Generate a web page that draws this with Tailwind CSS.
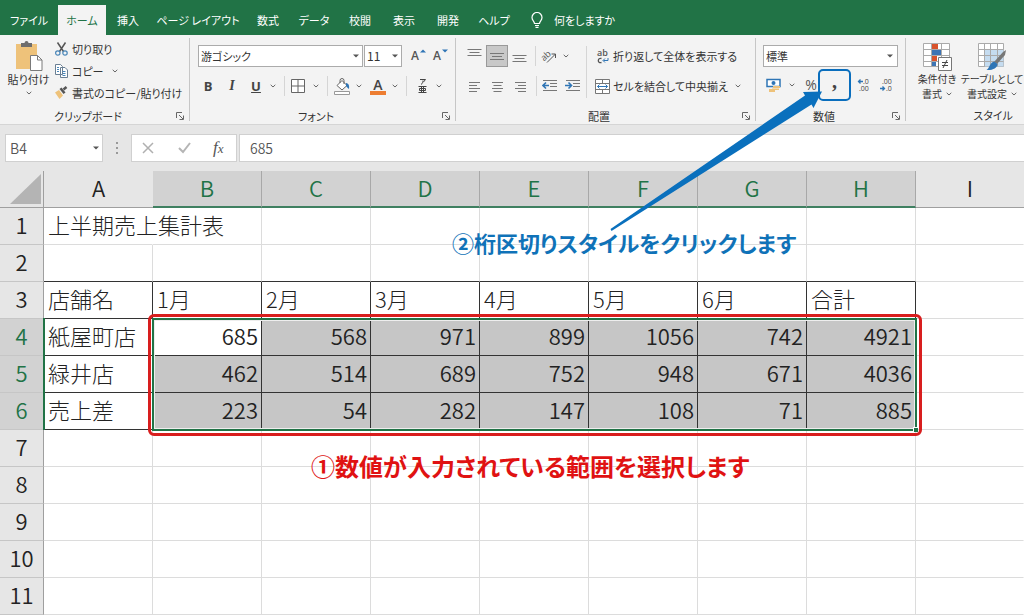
<!DOCTYPE html>
<html lang="ja">
<head>
  <meta charset="UTF-8" />
  <meta name="viewport" content="width=device-width, initial-scale=1" />
  <title>上半期売上集計表 - Excel</title>
  <script src="https://cdn.jsdelivr.net/npm/@tailwindcss/browser@4"></script>
</head>
<body class="relative min-h-screen overflow-hidden bg-[#e6e6e6] font-['Noto_Sans_CJK_JP',sans-serif] text-[11px] leading-4 text-[#333] [font-feature-settings:'palt']">

  <!-- shared icons -->
  <svg class="hidden">
    <symbol id="chev" viewBox="0 0 6 4"><path d="M.7.8 3 3 5.300.8" fill="none" stroke="#666" /></symbol>
    <symbol id="caret" viewBox="0 0 6 4"><path d="M0 .5h6L3 3.500z" fill="#555" /></symbol>
    <symbol id="launcher" viewBox="0 0 8 8"><path d="M.5 6V.5H6M3 3l4 4M7.500 3.500v4h-4" fill="none" stroke="#666" /></symbol>
  </svg>

  <!-- tabs -->
  <nav class="flex h-[35px] bg-[#217346] pt-[5px] text-white">
    <a href="#" class="flex w-[58px] items-center justify-center">ファイル</a>
    <a href="#" class="flex w-12 items-center justify-center bg-[#f3f3f3] text-[#217346]">ホーム</a>
    <a href="#" class="flex w-11 items-center justify-center">挿入</a>
    <a href="#" class="flex w-24 items-center justify-center">ページ レイアウト</a>
    <a href="#" class="flex w-11 items-center justify-center">数式</a>
    <a href="#" class="flex w-12 items-center justify-center">データ</a>
    <a href="#" class="flex w-11 items-center justify-center">校閲</a>
    <a href="#" class="flex w-11 items-center justify-center">表示</a>
    <a href="#" class="flex w-11 items-center justify-center">開発</a>
    <a href="#" class="flex w-12 items-center justify-center">ヘルプ</a>
    <button class="ml-3 flex items-center gap-[10px]">
      <svg class="h-4 w-[14px]" viewBox="0 0 14 16" fill="none" stroke="#fff" stroke-width="1.2"><path d="M4.500 11.500C4.500 9.500 2 8.500 2 5.500a5 5 0 0 1 10 0c0 3-2.500 4-2.500 6zM5 13.500h4M5.500 15.300h3" /></svg>
      何をしますか
    </button>
  </nav>

  <!-- ribbon -->
  <div class="flex h-[90px] border-b border-[#d5d5d5] bg-[#f3f3f3] pt-[3px]">

    <section class="flex h-[83px] w-[189px] shrink-0 flex-col">
      <div class="flex h-[69px] shrink-0">
        <button class="flex w-[58px] flex-col items-center pr-px pt-[3px]">
          <svg class="h-[30px] w-[28px]" viewBox="0 0 28 30">
            <path d="M1 3h21v25H1z" fill="#eec27a" /><path d="M6 6V2h3.500a2 2 0 0 1 4 0H17v4z" fill="#6d6d6d" />
            <path d="M15.500 14.500h7l4.500 4.500v10.500H15.500z" fill="#fff" stroke="#7a7a7a" /><path d="M22.500 14.500V19H27" fill="none" stroke="#7a7a7a" />
          </svg>
          <span class="whitespace-nowrap">貼り付け</span>
          <svg class="mt-1 h-1 w-[6px]"><use href="#chev" /></svg>
        </button>
        <div class="-ml-[3px] flex flex-col whitespace-nowrap">
          <button class="flex h-[22px] items-center gap-1">
            <svg class="h-[14px] w-[13px]" viewBox="0 0 13 14" fill="none"><path d="M2.500.5 8.500 9.500M10.500.5l-6 9" stroke="#555" stroke-width="1.500" /><circle cx="2.800" cy="11" r="2.200" stroke="#4a86b8" stroke-width="1.200" /><circle cx="10" cy="11" r="2.200" stroke="#4a86b8" stroke-width="1.200" /></svg>
            切り取り
          </button>
          <button class="flex h-[22px] items-center gap-1">
            <svg class="h-[14px] w-[13px]" viewBox="0 0 13 14" fill="#fff" stroke="#6a7f93"><path d="M.5.5h5l2 2v8h-7zM5.500 3.500h4.500l2.500 2.500v7.500h-7z" /><path d="M2 3.500h2M2 5.500h2M2 7.500h2M7.500 7.500h3M7.500 9.500h3M7.500 11.500h3" stroke="#4a86b8" /></svg>
            コピー
            <svg class="ml-1 h-1 w-[6px]"><use href="#chev" /></svg>
          </button>
          <button class="flex h-[22px] items-center gap-1">
            <svg class="h-[14px] w-[13px]" viewBox="0 0 13 14"><path d="m0 6.500 4-2.500 4 5.500-3.500 3.500z" fill="#eec27a" /><path d="m4.500 3 2-1.500 4 5-2 1.500z" fill="#555" /><path d="m8.500 3.500 3-2.500" stroke="#555" stroke-width="2.500" /></svg>
            書式のコピー/貼り付け
          </button>
        </div>
      </div>
      <div class="flex h-[17px] shrink-0 items-center">
        <span class="flex-1 text-center">クリップボード</span>
        <button class="w-[13px]" aria-label="クリップボードの設定"><svg class="h-2 w-2"><use href="#launcher" /></svg></button>
      </div>
    </section>

    <section class="flex h-[83px] w-[266px] shrink-0 flex-col border-l border-[#c6c6c6]">
      <div class="flex h-[69px] shrink-0 flex-col pl-2">
        <div class="flex items-center pt-[7px]">
          <div class="relative">
            <select aria-label="フォント" class="block h-[22px] w-[165px] appearance-none border border-[#ababab] bg-white pl-[2px]"><option>游ゴシック</option></select>
            <svg class="pointer-events-none absolute right-1 top-[9px] h-1 w-[6px]"><use href="#caret" /></svg>
          </div>
          <div class="relative ml-[1px]">
            <select aria-label="フォント サイズ" class="block h-[22px] w-[38px] appearance-none border border-[#ababab] bg-white pl-[2px] text-[12px]"><option>11</option></select>
            <svg class="pointer-events-none absolute right-1 top-[9px] h-1 w-[6px]"><use href="#caret" /></svg>
          </div>
          <button class="relative ml-2 w-4 pl-[1px] text-left font-['Open_Sans'] text-[12px] font-semibold text-[#555]">A<svg class="absolute right-0 top-[1px] h-1 w-[6px]" viewBox="0 0 6 4"><path d="M0 3.500h6L3 .5z" fill="#2f75b5" /></svg></button>
          <button class="relative ml-[6px] w-4 pl-[1px] text-left font-['Open_Sans'] text-[12px] font-semibold text-[#555]">A<svg class="absolute right-0 top-[1px] h-1 w-[6px]" viewBox="0 0 6 4"><path d="M0 .5h6L3 3.500z" fill="#2f75b5" /></svg></button>
        </div>
        <div class="flex h-[38px] items-center text-[#444]">
          <button class="w-5 text-center font-['Open_Sans'] text-[13px] font-bold">B</button>
          <button class="w-7 text-center font-['Liberation_Serif'] text-[14px] font-bold italic">I</button>
          <button class="w-5 text-center font-['Open_Sans'] text-[13px] font-bold underline">U</button>
          <svg class="ml-1 h-1 w-[6px]"><use href="#chev" /></svg>
          <span class="ml-2 h-5 border-l border-[#d5d5d5]"></span>
          <svg class="ml-[6px] h-[14px] w-[14px]" viewBox="0 0 14 14" fill="#fff" stroke="#666"><path d="M.5.5h13v13H.5zM7 .5v13M.5 7h13" /></svg>
          <svg class="ml-2 h-1 w-[6px]"><use href="#chev" /></svg>
          <span class="ml-2 h-5 border-l border-[#d5d5d5]"></span>
          <svg class="ml-[6px] h-[17px] w-4" viewBox="0 0 16 17"><path d="m3 7.500 5-5 5 5-5 4.500z" fill="#fff" stroke="#666" /><path d="M6 5V2.500a2 2 0 0 1 4 0V6" fill="none" stroke="#666" /><path d="M12 5c3 .5 3.500 3 3 6-1.500-1-2-2-3-3z" fill="#2f75b5" /><path d="M.5 13.500h15v3H.5z" fill="#fff" stroke="#999" /></svg>
          <svg class="ml-[6px] h-1 w-[6px]"><use href="#chev" /></svg>
          <button class="ml-2 h-[17px] w-4 border-b-[4px] border-[#ed7d31] text-center font-['Open_Sans'] text-[14px] leading-[13px] font-semibold">A</button>
          <svg class="ml-[6px] h-1 w-[6px]"><use href="#chev" /></svg>
          <span class="ml-2 h-5 border-l border-[#d5d5d5]"></span>
          <button aria-label="ふりがなの表示" class="ml-[10px]"><svg class="h-4 w-[11px]" viewBox="0 0 11 16" fill="none" stroke="#444"><path d="M3 1.500h5.500L6.500 4M6 2.500c0 2-.5 3-2 4M1.500 8.500h8M1.500 14.500h8M2.500 10.500h6v2h-6zM4.500 8.500v6M6.500 8.500v6" /></svg></button>
          <svg class="ml-2 h-1 w-[6px]"><use href="#chev" /></svg>
        </div>
      </div>
      <div class="flex h-[17px] shrink-0 items-center">
        <span class="flex-1 text-center">フォント</span>
        <button class="w-[13px]" aria-label="フォントの設定"><svg class="h-2 w-2"><use href="#launcher" /></svg></button>
      </div>
    </section>

    <section class="flex h-[83px] w-[300px] shrink-0 flex-col border-l border-[#c6c6c6]">
      <div class="flex h-[69px] shrink-0">
        <div class="flex w-[130px] flex-col pl-[7px]">
          <div class="flex h-[36px] items-center">
            <svg class="mx-1 h-[22px] w-[15px]" viewBox="0 0 15 22" stroke="#777"><path d="M.5 4.500h14M2.500 7.500h10M.5 10.500h14" /></svg>
            <button aria-label="上下中央揃え" class="flex h-[22px] w-[22px] items-center justify-center border border-[#999] bg-[#c8c8c8]"><svg class="h-[11px] w-[14px]" viewBox="0 0 14 11" stroke="#777"><path d="M0 2.500h14M2 5.500h10M0 8.500h14" /></svg></button>
            <svg class="mx-1 h-[22px] w-[15px]" viewBox="0 0 15 22" stroke="#777"><path d="M.5 10.500h14M2.500 13.500h10M.5 16.500h14" /></svg>
            <span class="ml-1 h-5 border-l border-[#d5d5d5]"></span>
            <svg class="ml-[5px] h-4 w-[17px]" viewBox="0 0 17 16" overflow="visible"><text x="0" y="10" font-family="Open Sans" font-size="9" fill="#555" transform="rotate(-42 6 8)">ab</text><path d="M6 14.500 14.500 6M10.500 6h4v4" fill="none" stroke="#555" /></svg>
            <svg class="ml-[5px] h-1 w-[6px] shrink-0"><use href="#chev" /></svg>
          </div>
          <div class="flex h-6 items-center">
            <svg class="mx-[6px] h-[11px] w-[11px]" viewBox="0 0 11 11" stroke="#777"><path d="M0 1.500h11M0 4.500h8M0 7.500h11M0 10.500h8" /></svg>
            <svg class="mx-[6px] h-[11px] w-[11px]" viewBox="0 0 11 11" stroke="#777"><path d="M0 1.500h11M1.500 4.500h8M0 7.500h11M1.500 10.500h8" /></svg>
            <svg class="mx-[6px] h-[11px] w-[11px]" viewBox="0 0 11 11" stroke="#777"><path d="M0 1.500h11M3 4.500h8M0 7.500h11M3 10.500h8" /></svg>
            <span class="ml-1 h-5 border-l border-[#d5d5d5]"></span>
            <svg class="ml-[5px] h-3 w-[15px]" viewBox="0 0 15 12"><path d="M1 .5h14M8 3.500h7M8 6.500h7M1 10.500h14" stroke="#777" /><path d="M7 5.500H1.500M4 2.500l-3 3 3 3" fill="none" stroke="#2f75b5" stroke-width="1.600" /></svg>
            <svg class="ml-2 h-3 w-[15px]" viewBox="0 0 15 12"><path d="M1 .5h14M8 3.500h7M8 6.500h7M1 10.500h14" stroke="#777" /><path d="M0 5.500h5.500M3.500 2.500l3 3-3 3" fill="none" stroke="#2f75b5" stroke-width="1.600" /></svg>
          </div>
        </div>
        <div class="mt-2 h-[52px] border-l border-[#d5d5d5]"></div>
        <div class="flex flex-col whitespace-nowrap pl-2">
          <button class="flex h-[36px] items-center gap-[3px]">
            <svg class="h-[15px] w-[15px]" viewBox="0 0 15 15" overflow="visible"><text x="2" y="7" font-family="Open Sans" font-size="9" font-weight="600" fill="#555">ab</text><path d="M6.500 9.500c-4-1-4.500 5 0 4" fill="none" stroke="#555" stroke-width="1.300" /><path d="M13 9v2.500H8.500m1.500-2-2 2 2 2" fill="none" stroke="#2f75b5" /></svg>
            折り返して全体を表示する
          </button>
          <button class="flex h-6 items-center gap-[3px]">
            <svg class="h-[15px] w-[15px]" viewBox="0 0 15 15"><path d="M.5.5h14v14H.5zM.5 4.500h14M.5 10.500h14M7.500.5v4M7.500 10.500v4" fill="#fff" stroke="#777" /><path d="M2.500 7.500h10M4.500 5.500l-2 2 2 2M10.500 5.500l2 2-2 2" fill="none" stroke="#2f75b5" /></svg>
            セルを結合して中央揃え
            <svg class="ml-1 h-1 w-[6px]"><use href="#chev" /></svg>
          </button>
        </div>
      </div>
      <div class="flex h-[17px] shrink-0 items-center">
        <span class="flex-1 text-center">配置</span>
        <button class="w-[13px]" aria-label="配置の設定"><svg class="h-2 w-2"><use href="#launcher" /></svg></button>
      </div>
    </section>

    <section class="flex h-[83px] w-[150px] shrink-0 flex-col border-l border-[#c6c6c6]">
      <div class="h-[69px] shrink-0 pl-[7px]">
        <div class="relative pt-[7px]">
          <select aria-label="表示形式" class="block h-[22px] w-[135px] appearance-none border border-[#ababab] bg-white pl-[2px]"><option>標準</option></select>
          <svg class="pointer-events-none absolute right-3 top-4 h-1 w-[6px]"><use href="#caret" /></svg>
        </div>
        <div class="flex h-[36px] items-center">
          <svg class="ml-[3px] h-[15px] w-[15px]" viewBox="0 0 15 15"><path d="M1 1.500h13v7H1z" fill="#fff" stroke="#2f75b5" stroke-width="1.500" /><circle cx="7.500" cy="5" r="2" fill="#2f75b5" /><path d="M7 8h7v2H7zM6 10.500h7v1.500H6zM3 11h6v3H3z" fill="#eec27a" /></svg>
          <svg class="ml-2 h-1 w-[6px]"><use href="#chev" /></svg>
          <button class="ml-[9px] w-[14px] text-center font-['Open_Sans'] text-[14px] text-[#555]">%</button>
          <button aria-label="桁区切りスタイル" class="flex h-8 w-[33px] items-center justify-center rounded-[5px] border-2 border-[#0a6ebd] pb-2 font-['Liberation_Serif'] text-[20px] font-bold text-[#444]">,</button>
          <svg class="ml-[6px] h-[14px] w-[13px]" viewBox="0 0 13 14" font-family="Open Sans" font-size="7" fill="#444"><text x="6" y="6">.0</text><text x="2" y="13">.00</text><path d="M6 3.500H1.500m2-2-2 2 2 2" fill="none" stroke="#2f75b5" stroke-width="1.300" /></svg>
          <svg class="ml-[10px] h-[14px] w-[13px]" viewBox="0 0 13 14" font-family="Open Sans" font-size="7" fill="#444"><text x="2" y="6">.00</text><text x="6" y="13">.0</text><path d="M0 10.500h4.500m-2-2 2 2-2 2" fill="none" stroke="#2f75b5" stroke-width="1.300" /></svg>
        </div>
      </div>
      <div class="flex h-[17px] shrink-0 items-center">
        <span class="flex-1 text-center">数値</span>
        <button class="w-[13px]" aria-label="数値の設定"><svg class="h-2 w-2"><use href="#launcher" /></svg></button>
      </div>
    </section>

    <section class="flex h-[83px] min-w-0 flex-1 flex-col border-l border-[#c6c6c6]">
      <div class="flex h-[69px] shrink-0 whitespace-nowrap pl-2 text-[10px]">
        <button class="flex w-[46px] flex-col items-center pt-[5px]">
          <svg class="h-[28px] w-[29px] shrink-0" viewBox="0 0 29 28">
            <path d="M.5.5h26v23H.5z" fill="#fff" stroke="#aaa" /><path d="M.5 6.500h26M.5 12.500h26M.5 18.500h26M8.500.5v23M18.500.5v23" stroke="#aaa" />
            <path d="M9 1h6v5H9zM9 13h5v5H9z" fill="#d8532c" /><path d="M9 7h9v5H9z" fill="#3c74b4" /><path d="M9 19h4v4H9z" fill="#3c74b4" />
            <path d="M15.500 14.500h13v13h-13z" fill="#fff" stroke="#777" /><path d="M19 19.500h6M19 22.500h6M24 17l-4 8" stroke="#444" />
          </svg>
          <span>条件付き</span>
          <span class="flex items-center gap-1 leading-[14px]">書式 <svg class="h-1 w-[6px]"><use href="#chev" /></svg></span>
        </button>
        <button class="flex w-16 flex-col items-center pt-[5px]">
          <svg class="h-[28px] w-[29px] shrink-0" viewBox="0 0 29 28">
            <path d="M.5.5h25v23H.5z" fill="#fff" stroke="#aaa" /><path d="M7 6.500h18.500v17H7z" fill="#c5dcf0" /><path d="M.5 6.500h25M.5 12.500h25M.5 18.500h25M6.500.5v23M12.500.5v23M19.500.5v23" stroke="#aaa" />
            <path d="m28 7-1 5-8 9-3-2 9-10z" fill="#777" /><path d="M16 18.500 19.500 21c0 4-5 6.500-11 6 3-1.500 3-7 7.500-8.500z" fill="#2f75b5" />
          </svg>
          <span>テーブルとして</span>
          <span class="flex items-center gap-1 leading-[14px]">書式設定 <svg class="h-1 w-[6px]"><use href="#chev" /></svg></span>
        </button>
      </div>
      <div class="shrink-0 pl-14 text-center leading-[17px]">スタイル</div>
    </section>
  </div>

  <!-- formula bar -->
  <div class="flex h-[46px] items-start pl-[5px] pt-[9px] text-[#555]">
    <div class="relative">
      <input aria-label="名前ボックス" value="B4" class="block h-[28px] w-[98px] border border-[#d0d0d0] bg-white pl-1 text-[14px] font-[350] outline-none" />
      <svg class="pointer-events-none absolute right-1 top-3 h-1 w-[6px]"><use href="#caret" /></svg>
    </div>
    <svg class="ml-3 h-[28px] w-1" viewBox="0 0 4 28" fill="#999"><path d="M1 8h2v2H1zM1 13h2v2H1zM1 18h2v2H1z" /></svg>
    <div class="ml-3 flex h-[28px] w-[106px] items-center border border-[#d0d0d0] bg-white pl-[10px]">
      <svg class="h-3 w-3" viewBox="0 0 12 12" stroke="#b0b0b0" stroke-width="1.500"><path d="m1 1 10 10M11 1 1 11" /></svg>
      <svg class="ml-6 h-3 w-[13px]" viewBox="0 0 13 12" fill="none" stroke="#b5b5b5" stroke-width="2"><path d="m1 6 4 4 7-9" /></svg>
      <button aria-label="関数の挿入" class="ml-[22px] font-['Liberation_Serif'] text-[17px] italic">f<span class="text-[13px]">x</span></button>
    </div>
    <input aria-label="数式バー" value="685" class="ml-[2px] block h-[28px] min-w-0 flex-1 border border-r-0 border-[#d0d0d0] bg-white pl-[10px] text-[14px] font-[350] outline-none" />
  </div>

  <!-- sheet -->
  <main class="relative">
    <table class="w-full table-fixed border-separate border-spacing-0 bg-white text-[22px] leading-6 font-[350] text-[#222] [font-feature-settings:normal]">
      <colgroup id="cols"></colgroup>
      <thead><tr id="head"></tr></thead>
      <tbody id="rows"></tbody>
    </table>

    <!-- selection frame -->
    <div class="pointer-events-none absolute left-[43px] top-[147px] h-[112px] border-l-2 border-[#217346]"></div>
    <div class="pointer-events-none absolute left-[152px] top-[147px] h-[113px] w-[765px] border-2 border-[#217346]">
      <div class="h-full border border-[#eee]"></div>
      <div class="absolute -bottom-[3px] -right-[3px] h-[5px] w-[5px] border-l border-t border-white bg-[#217346]"></div>
    </div>
    <div class="pointer-events-none absolute left-[148px] top-[143px] h-[122px] w-[774px] rounded-[6px] border-[3px] border-[#d81e1e]"></div>

    <p class="absolute left-[452px] top-[56px] whitespace-nowrap text-[22px] leading-[30px] font-bold text-[#0f72b8]">②桁区切りスタイルをクリックします</p>
    <p class="absolute left-[311px] top-[280px] whitespace-nowrap text-[24px] leading-[30px] font-bold text-[#e01212]">①数値が入力されている範囲を選択します</p>
  </main>

  <svg class="pointer-events-none absolute left-0 top-0 h-[240px] w-[840px]" viewBox="0 0 840 240" fill="#0a70bd">
    <path d="M610.500 229 805 95.500l-2-3.500L822 91.500 813.500 108l-2-3.500L611.500 231z" />
  </svg>

<script>
  const letters = ['A', 'B', 'C', 'D', 'E', 'F', 'G', 'H', 'I'];
  const data = {
    1: ['上半期売上集計表'],
    3: ['店舗名', '1月', '2月', '3月', '4月', '5月', '6月', '合計'],
    4: ['紙屋町店', 685, 568, 971, 899, 1056, 742, 4921],
    5: ['緑井店', 462, 514, 689, 752, 948, 671, 4036],
    6: ['売上差', 223, 54, 282, 147, 108, 71, 885]
  };

  document.getElementById('cols').innerHTML =
    '<col class="w-[44px]">' + '<col class="w-[109px]">'.repeat(8) + '<col>';

  let head = `<th class="h-[37px] border-b border-r border-[#9f9f9f] bg-[#e6e6e6] p-0">
    <svg class="ml-auto mr-[2px] h-[30px] w-[31px]" viewBox="0 0 31 30"><path d="M31 0v30H0z" fill="#b4b4b4" /></svg></th>`;
  letters.forEach((l, c) => {
    const cls = c > 0 && c < 8
      ? 'border-b-2 border-b-[#3f8061] border-r border-r-[#a8a8a8] bg-[#d2d2d2] text-[#217346]'
      : 'border-b border-b-[#9f9f9f] bg-[#e6e6e6]';
    head += `<th scope="col" class="h-[37px] p-0 pb-1 font-[350] ${cls}">${l}</th>`;
  });
  document.getElementById('head').innerHTML = head;

  let html = '';
  for (let r = 1; r <= 11; r++) {
    const sel = r >= 4 && r <= 6;
    html += `<tr><th scope="row" class="h-[37px] border-b border-r border-b-[#c6c6c6] border-r-[#9f9f9f] p-0 pb-1 font-[350] ${sel ? 'bg-[#d2d2d2] text-[#217346]' : 'bg-[#e6e6e6]'}">${r}</th>`;
    letters.forEach((l, c) => {
      const v = data[r] && data[r][c] !== undefined ? data[r][c] : '';
      const boxed = r >= 3 && r <= 6 && c < 8;
      let cls = 'border-[#dcdcdc]';
      if (boxed) cls = 'border-[#333]';
      else if (r === 2 && c < 8) cls = 'border-r-[#dcdcdc] border-b-[#333]';
      if (r === 1 && c === 0) cls = 'border-b-[#dcdcdc] border-r-transparent';
      if (c === 8) cls += ' border-r-transparent';
      cls += typeof v === 'number' ? ' text-right' : ' font-light';
      if (sel && c > 0 && c < 8 && !(r === 4 && c === 1)) cls += ' bg-[#c6c6c6]';
      html += `<td class="h-[37px] whitespace-nowrap border-b border-r pt-0 pb-1 pl-1 pr-[3px] ${cls}">${v}</td>`;
    });
    html += '</tr>';
  }
  document.getElementById('rows').innerHTML = html;
</script>

</body>
</html>
